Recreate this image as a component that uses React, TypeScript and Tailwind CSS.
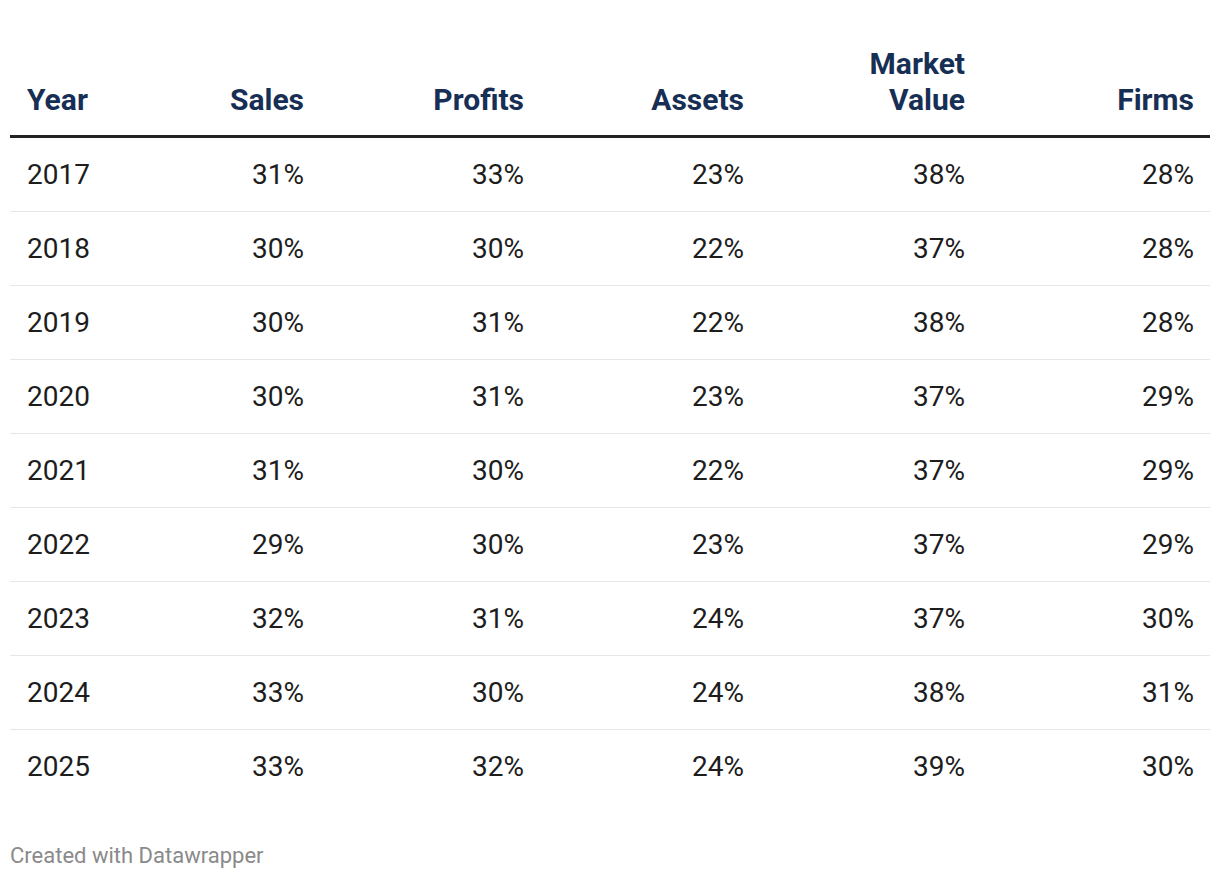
const rows: string[][] = [
  ['2017', '31%', '33%', '23%', '38%', '28%'],
  ['2018', '30%', '30%', '22%', '37%', '28%'],
  ['2019', '30%', '31%', '22%', '38%', '28%'],
  ['2020', '30%', '31%', '23%', '37%', '29%'],
  ['2021', '31%', '30%', '22%', '37%', '29%'],
  ['2022', '29%', '30%', '23%', '37%', '29%'],
  ['2023', '32%', '31%', '24%', '37%', '30%'],
  ['2024', '33%', '30%', '24%', '38%', '31%'],
  ['2025', '33%', '32%', '24%', '39%', '30%'],
];

const cols = 'grid grid-cols-[90px_220px_220px_220px_221px_229px]';

export default function App(): React.JSX.Element {
  return (
    <div className="w-[1220px] h-[878px] bg-white px-[10px] pt-[46px] font-['Roboto',sans-serif]">
      {/* header */}
      <div className={`${cols} border-b-[3px] border-[#222222] pb-[17px] text-[30px] leading-[36px] font-bold text-[#172f54]`}>
        <div className="flex items-end pl-[17px]">Year</div>
        <div className="flex items-end justify-end pr-[16px]">Sales</div>
        <div className="flex items-end justify-end pr-[16px]">Profits</div>
        <div className="flex items-end justify-end pr-[16px]">Assets</div>
        <div className="flex items-end justify-end pr-[16px] text-right">
          Market
          <br />
          Value
        </div>
        <div className="flex items-end justify-end pr-[16px]">Firms</div>
      </div>

      {/* body */}
      <div className="text-[28px] text-[#1d1d1d]">
        {rows.map((r, i) => (
          <div
            key={r[0]}
            className={`${cols} h-[74px] items-center ${i < rows.length - 1 ? 'border-b border-[#e6e6e6]' : ''}`}
          >
            {r.map((c, j) => (
              <div key={j} className={j === 0 ? 'pl-[17px]' : 'text-right pr-[16px]'}>
                {c}
              </div>
            ))}
          </div>
        ))}
      </div>

      <div className="mt-[35px] text-[22px] text-[#8a8a8a]">Created with Datawrapper</div>
    </div>
  );
}
